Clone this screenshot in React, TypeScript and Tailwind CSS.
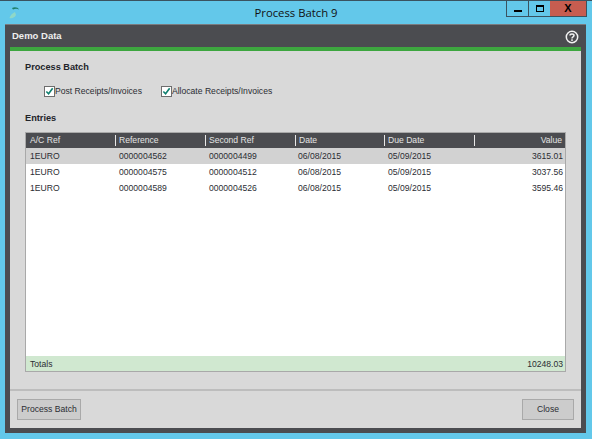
const rows = [
  { ac: "1EURO", ref: "0000004562", second: "0000004499", date: "06/08/2015", due: "05/09/2015", value: "3615.01" },
  { ac: "1EURO", ref: "0000004575", second: "0000004512", date: "06/08/2015", due: "05/09/2015", value: "3037.56" },
  { ac: "1EURO", ref: "0000004589", second: "0000004526", date: "06/08/2015", due: "05/09/2015", value: "3595.46" },
];

const grid = "grid grid-cols-[89px_90px_90px_89px_90px_1fr]";

const Check = ({ label }: { label: string }) => (
  <label className="flex items-center">
    <span className="flex h-[11px] w-[11px] items-center justify-center border border-[#6d6d6d] bg-white">
      <svg viewBox="0 0 10 10" className="h-[9px] w-[9px]">
        <path d="M1.5 5 L4 7.5 L8.5 1.5" fill="none" stroke="#0f7f6f" strokeWidth="1.8" />
      </svg>
    </span>
    <span>{label}</span>
  </label>
);

const Head = ({ label, right }: { label: string; right?: boolean }) => (
  <div className={`flex items-center ${right ? "justify-end pr-[3px]" : ""}`}>
    <span className="mr-[3px] h-[11px] w-px shrink-0 bg-[#e8e8e8]" />
    <span className={right ? "ml-auto" : ""}>{label}</span>
  </div>
);

export default function App() {
  return (
    <div className="flex h-[439px] w-[592px] flex-col overflow-hidden border-t border-[#3a5360] bg-[#63c8ea] font-['Liberation_Sans',sans-serif] text-[8.6px] text-[#2b2d33]">
      <div className="relative flex h-[23px] shrink-0 items-start justify-center">
        <svg viewBox="0 0 14 14" className="absolute left-[7px] top-[5px] h-[14px] w-[14px]">
          <path d="M5 2 C8 0.5 11 1.5 12 3.5 C10 2.5 8 2.5 6 3.5 Z" fill="#1f7f6a" />
          <path d="M8 6 C6 7 3 9 2.5 12 C5 13 8 11 9 9 Z" fill="#8fd8c8" />
        </svg>
        <span className="mt-[4px] font-['Open_Sans',sans-serif] text-[11.3px] leading-[16px] text-[#111]">Process Batch 9</span>
        <div className="absolute right-[5px] top-0 flex h-[16px] border-x border-b border-[#3a5360]">
          <div className="flex w-[22px] items-center justify-center border-r border-[#3a5360]">
            <span className="mt-[4px] h-[2px] w-[8px] bg-black" />
          </div>
          <div className="flex w-[21px] items-center justify-center">
            <span className="h-[7px] w-[8px] border-[1.5px] border-t-2 border-black" />
          </div>
          <div className="flex w-[36px] items-center justify-center bg-[#c75d50] text-[11px] font-bold text-black">X</div>
        </div>
      </div>

      <div className="mx-[5px] flex h-[409px] w-[581px] flex-col border-t border-[#7a7c80] bg-[#4b4c50] px-[5px] pb-[5px]">
        <div className="flex h-[22px] shrink-0 items-center justify-between">
          <span className="ml-[2px] text-[9.5px] font-bold text-[#eeeeee]">Demo Data</span>
          <svg viewBox="0 0 14 14" className="mt-[2px] mr-[2px] h-[14px] w-[14px]">
            <circle cx="7" cy="7" r="5.7" fill="none" stroke="#f2f2f2" strokeWidth="1.5" />
            <path d="M5 5.6 C5 3.6 9 3.6 9 5.6 C9 7 7 6.8 7 8.4" fill="none" stroke="#f2f2f2" strokeWidth="1.5" />
            <rect x="6.2" y="9.3" width="1.6" height="1.6" fill="#f2f2f2" />
          </svg>
        </div>
        <div className="h-[4px] shrink-0 bg-[#3da63f]" />
        <div className="flex min-h-0 flex-1 flex-col bg-[#d9d9d9]">
          <div className="flex min-h-0 flex-1 flex-col border-b-2 border-[#bdbdbd] px-[15px]">
            <h2 className="mt-[10px] text-[9.2px] leading-[13px] font-bold text-[#22242a]">Process Batch</h2>
            <div className="mt-[11px] ml-[19px] flex h-[13px] items-center gap-[19px]">
              <Check label="Post Receipts/Invoices" />
              <Check label="Allocate Receipts/Invoices" />
            </div>
            <h2 className="mt-[14px] text-[9.2px] leading-[13px] font-bold text-[#22242a]">Entries</h2>
            <div className="mt-[7px] mb-[17px] flex min-h-0 flex-1 flex-col border border-[#a9a9a9] bg-white">
              <div className={`${grid} h-[15px] shrink-0 items-center bg-[#4b4c50] text-[#e4e4e4]`}>
                <span className="pl-[4px]">A/C Ref</span>
                <Head label="Reference" />
                <Head label="Second Ref" />
                <Head label="Date" />
                <Head label="Due Date" />
                <Head label="Value" right />
              </div>
              <div className="flex-1">
                {rows.map((r, i) => (
                  <div key={r.ref} className={`${grid} h-[16px] items-center ${i === 0 ? "bg-[#d2d2d2]" : ""}`}>
                    <span className="pl-[4px]">{r.ac}</span>
                    <span className="pl-[4px]">{r.ref}</span>
                    <span className="pl-[4px]">{r.second}</span>
                    <span className="pl-[3px]">{r.date}</span>
                    <span className="pl-[4px]">{r.due}</span>
                    <span className="pr-[2px] text-right">{r.value}</span>
                  </div>
                ))}
              </div>
              <div className="flex h-[15px] shrink-0 items-center justify-between bg-[#d0e8d0] pt-px pr-[2px] pl-[4px]">
                <span>Totals</span>
                <span>10248.03</span>
              </div>
            </div>
          </div>
          <div className="flex h-[37px] shrink-0 items-center justify-between pr-[7px] pl-[7px]">
            <button className="h-[21px] w-[64px] border border-[#a9a9a9] bg-[#cccccc]">Process Batch</button>
            <button className="h-[21px] w-[52px] border border-[#a9a9a9] bg-[#cccccc]">Close</button>
          </div>
        </div>
      </div>
    </div>
  );
}
